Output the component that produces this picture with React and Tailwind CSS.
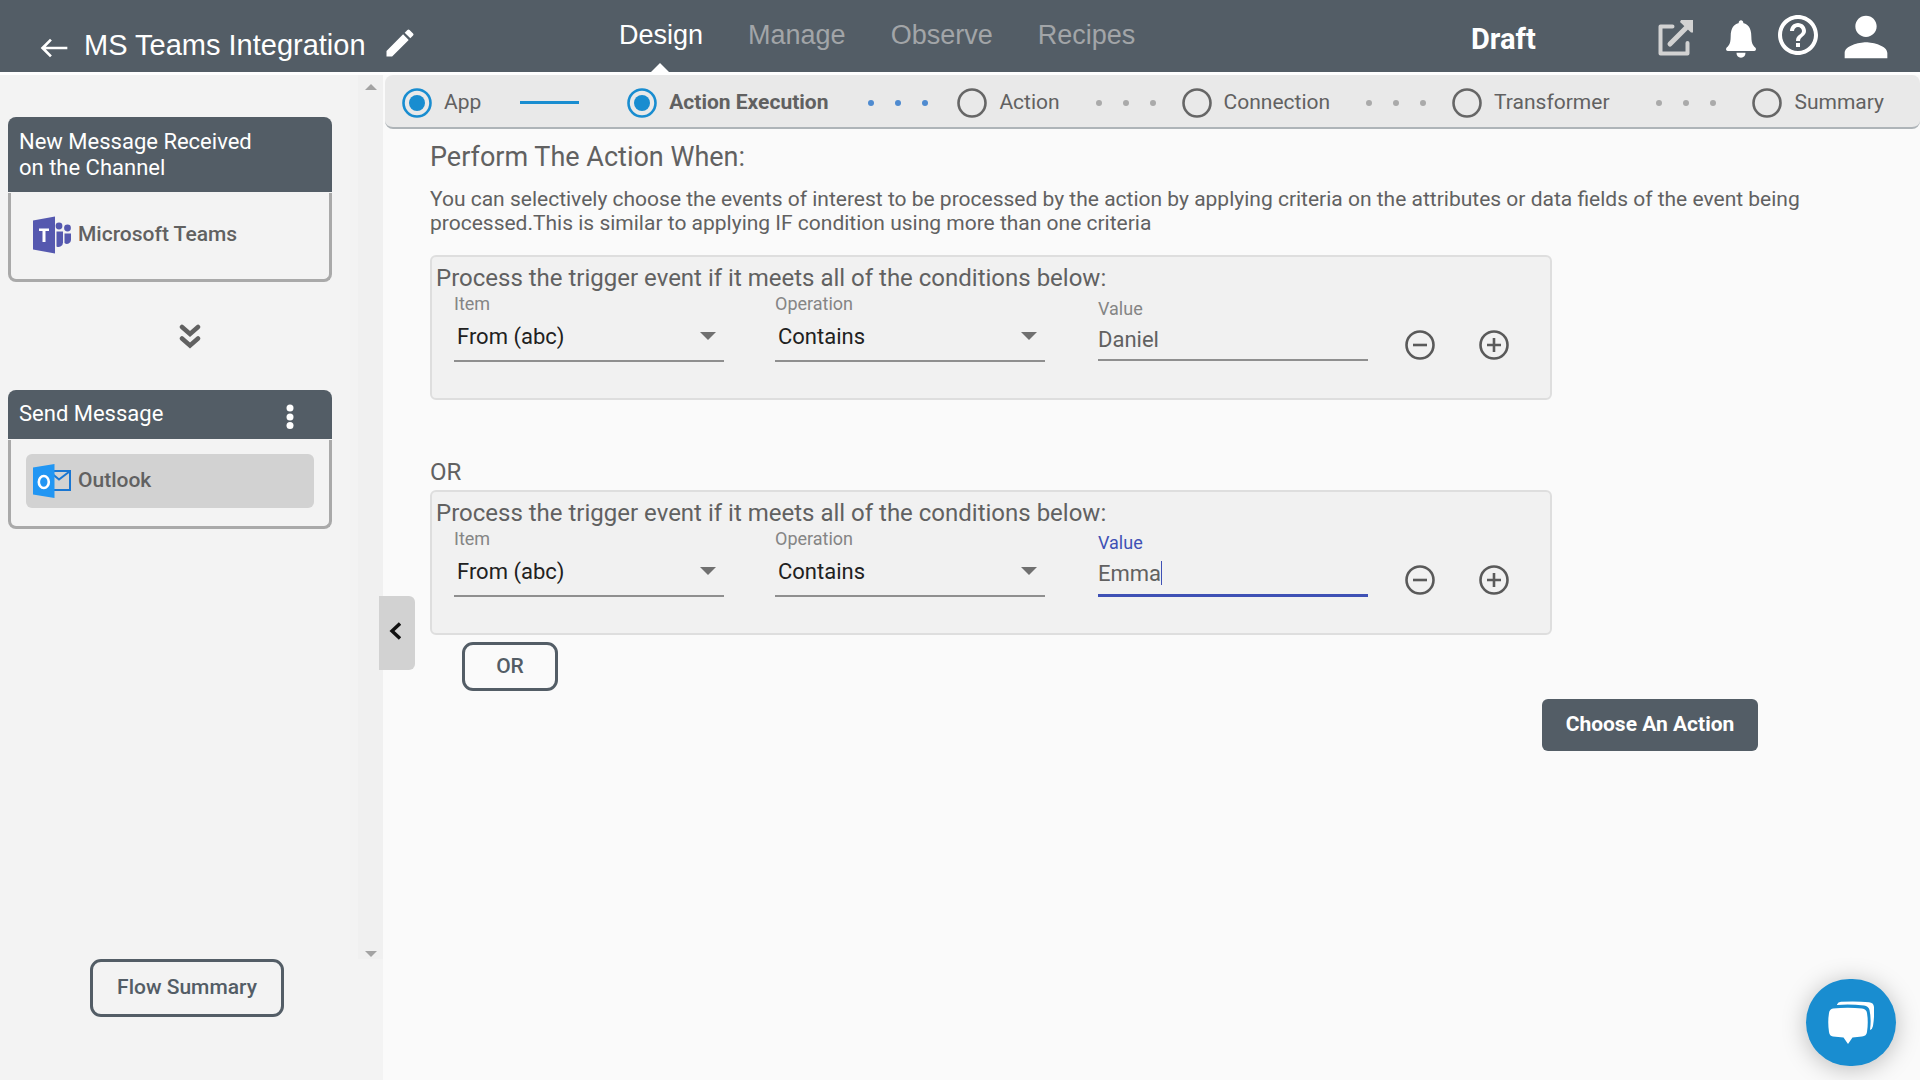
import { IoIosNotifications } from "react-icons/io";
import { MdEdit, MdHelpOutline, MdPerson, MdWest } from "react-icons/md";

const NAV = ["Design", "Manage", "Observe", "Recipes"];

function TeamsLogo() {
  return (
    <svg viewBox="0 0 38 38" className="h-[38px] w-[38px] shrink-0">
      <path fill="#5558af" d="M0 4.500 22 0.500V37.500L0 33.500z" />
      <path fill="#fff" d="M6 12.500h10v2.500h-3.500V26h-3V15H6z" />
      <g fill="#5558af">
        <circle cx="26" cy="10" r="3.400" />
        <circle cx="34.500" cy="12" r="3.400" />
        <path d="M23.500 15.500H30V26.500a4.500 4.500 0 0 1-6.500 4z" />
        <path d="M31.500 17.500H38V24a4 4 0 0 1-6.500 3z" />
      </g>
    </svg>
  );
}

function OutlookLogo() {
  return (
    <svg viewBox="0 0 38 38" className="h-[38px] w-[38px] shrink-0">
      <path fill="none" stroke="#1976d2" strokeWidth="2" d="M20 9H37V28H20M20 12.500 26 17.500 36.500 9.500" />
      <path fill="#2196f3" d="M0 5.500 21.500 2V36L0 32.500z" />
      <ellipse cx="10.800" cy="20" rx="5" ry="6" fill="none" stroke="#fff" strokeWidth="2.600" />
    </svg>
  );
}

function Header() {
  return (
    <header className="grid h-[75px] grid-cols-[619fr_852fr_449fr] items-start border-b-[3px] border-white bg-[#535d66] font-['Liberation_Sans',Arial,sans-serif] text-white">
      <div className="flex items-center pt-[25px] pl-[38px]">
        <button aria-label="Back" className="flex pt-[5px]"><MdWest size={32} /></button>
        <h1 className="ml-[14px] text-[29px] leading-10 whitespace-nowrap">MS Teams Integration</h1>
        <button aria-label="Rename" className="-mt-1 ml-4 flex"><MdEdit size={36} /></button>
      </div>
      <nav className="flex h-[72px] gap-[45px] pt-[15px] text-[27px] leading-10">
        {NAV.map((n, i) => (
          <a key={n} href={"#" + n.toLowerCase()} className={i === 0 ? "relative text-white" : "text-[#a2a5a8]"}>
            {n}
            {i === 0 && <svg viewBox="0 0 20 10" className="absolute top-[48px] left-[31px] h-[10px] w-5"><path fill="#fff" d="M0 10 10 0 20 10z" /></svg>}
          </a>
        ))}
      </nav>
      <div className="flex h-[72px] items-start">
        <span className="pt-[19px] font-[Roboto] text-[29px] leading-10 font-bold">Draft</span>
        <div className="ml-auto flex items-start pr-[22px]">
          <button aria-label="Open in new window" className="mt-[19px] mr-[23px]">
            <svg viewBox="0 0 38 38" className="h-[38px] w-[38px]" fill="none" stroke="#d2d2d2" strokeWidth="4">
              <path strokeLinecap="round" strokeLinejoin="round" d="M16.500 7.500H4.500V34.500H31.500V24" />
              <path strokeWidth="5" strokeLinecap="round" d="M14 25 30 9" />
              <path fill="#d2d2d2" stroke="none" d="M25 1H37V13.500H35L24 3z" />
            </svg>
          </button>
          <button aria-label="Notifications" className="mt-[15px]"><IoIosNotifications size={48} /></button>
          <button aria-label="Help" className="mt-[11px] ml-[9px]"><MdHelpOutline size={48} /></button>
          <button aria-label="Account" className="mt-[5px] ml-[12px]"><MdPerson size={64} /></button>
        </div>
      </div>
    </header>
  );
}

function Sidebar() {
  return (
    <aside className="flex w-[383px] shrink-0 flex-col bg-[#f3f3f3]">
      <div className="flex min-h-0 flex-1">
        <div className="flex-1 pt-[42px] pl-2">
          <section className="w-[324px]">
            <h2 className="rounded-t-lg bg-[#535d66] px-[11px] pt-3 pb-[11px] text-[22px] leading-[26px] text-white">New Message Received<br />on the Channel</h2>
            <div className="mt-px flex h-[89px] items-center gap-[7px] rounded-b-lg border-[3px] border-t-0 border-[#a9a9a9] pb-[3px] pl-[22px] text-[21px] font-medium text-[#616161]">
              <TeamsLogo />Microsoft Teams
            </div>
          </section>
          <div className="ml-[171px] flex h-[108px] w-[22px] flex-col items-center justify-center pt-px text-[#616161]">
            <svg viewBox="0 0 22 26" className="h-[26px] w-[22px]" fill="none" stroke="currentColor" strokeWidth="4.500"><path strokeLinecap="round" d="M3 3 11 10 19 3M3 14.500 11 21.500 19 14.500" /></svg>
          </div>
          <section className="w-[324px]">
            <div className="flex h-[49px] items-center rounded-t-lg bg-[#535d66] pr-[36px] pl-[11px] text-white">
              <h2 className="flex-1 pb-[2px] text-[22px] leading-[26px]">Send Message</h2>
              <button aria-label="More options">
                <svg viewBox="0 0 12 26" className="mt-1 h-[26px] w-3" fill="currentColor"><circle cx="6" cy="4" r="3.500" /><circle cx="6" cy="13" r="3.500" /><circle cx="6" cy="21.500" r="3.500" /></svg>
              </button>
            </div>
            <div className="mt-px h-[89px] rounded-b-lg border-[3px] border-t-0 border-[#a9a9a9] px-[15px] pt-[14px]">
              <button className="flex h-[54px] w-full items-center gap-[7px] rounded-md bg-[#d2d2d2] px-[7px] text-[21px] font-medium text-[#616161]"><OutlookLogo />Outlook</button>
            </div>
          </section>
        </div>
        <div className="flex w-[25px] flex-col items-center justify-between bg-[#f0f0f0] pt-[9px] pb-[2px] text-[#a3a3a3]">
          <svg viewBox="0 0 12 6" className="h-[6px] w-3"><path fill="currentColor" d="M0 6 6 0 12 6z" /></svg>
          <svg viewBox="0 0 12 6" className="h-[6px] w-3"><path fill="currentColor" d="M0 0 6 6 12 0z" /></svg>
        </div>
      </div>
      <div className="h-[121px] pl-[90px]">
        <button className="h-[58px] w-[194px] rounded-[11px] border-[3px] border-[#535d66] px-1 text-[21px] font-medium text-[#535d66]">Flow Summary</button>
      </div>
    </aside>
  );
}

function Step({ label, state }) {
  return (
    <a href="#step" aria-current={state === "current" ? "step" : undefined} className="flex items-center gap-3 whitespace-nowrap">
      <svg viewBox="0 0 30 30" className="h-[30px] w-[30px]" fill="none">
        <circle cx="15" cy="15" r="13.500" strokeWidth="2.600" stroke={state ? "#198dd0" : "#666"} />
        {state && <circle cx="15" cy="15" r="8" fill="#198dd0" />}
      </svg>
      <span className={state === "current" ? "font-bold" : ""}>{label}</span>
    </a>
  );
}

function Dots({ grow, color = "bg-[#aaa]" }) {
  return (
    <div className="flex items-center justify-center gap-[21px] pl-[10px]" style={{ flexGrow: grow, flexBasis: 0 }}>
      {[0, 1, 2].map((i) => <span key={i} className={"h-[6px] w-[6px] rounded-full " + color} />)}
    </div>
  );
}

function Stepper() {
  return (
    <nav aria-label="Steps" className="ml-[2px] flex h-[54px] items-center rounded-lg border-b-2 border-[#aeb4b8] bg-[#e9e9e9] pt-[3px] pr-[36px] pl-[17px] text-[21px] text-[#616161]">
      <Step label="App" state="done" />
      <div className="flex shrink-0 grow-[136] basis-0 justify-center pr-[10px]"><span className="h-[3px] w-[59px] bg-[#198dd0]" /></div>
      <Step label="Action Execution" state="current" />
      <Dots grow={119} color="bg-[#4f8bd0]" />
      <Step label="Action" />
      <Dots grow={112} />
      <Step label="Connection" />
      <Dots grow={112} />
      <Step label="Transformer" />
      <Dots grow={133} />
      <Step label="Summary" />
    </nav>
  );
}

function SelectField({ label, value, id }) {
  return (
    <div className="w-[270px]">
      <label htmlFor={id} className="block text-[18px] leading-5 text-[#858585]">{label}</label>
      <div className="relative border-b-2 border-[#8f8f8f]">
        <select id={id} defaultValue={value} className="block h-[46px] w-full appearance-none bg-transparent pb-[2px] pl-[3px] text-[22px] text-[#212121] outline-none">
          <option>{value}</option>
        </select>
        <svg viewBox="0 0 16 8" className="pointer-events-none absolute top-[18px] right-2 h-2 w-4"><path fill="#707070" d="M0 0H16L8 8z" /></svg>
      </div>
    </div>
  );
}

function Condition({ id, value, focused }) {
  return (
    <section className="h-[145px] w-[1122px] max-w-full rounded-md border-2 border-[#dedede] bg-[#f1f1f1]">
      <h3 className="pt-[7px] pl-1 text-[24px] leading-[28px]">Process the trigger event if it meets all of the conditions below:</h3>
      <div className="flex items-start pt-[2px] pl-[22px]">
        <SelectField id={id + "-item"} label="Item" value="From (abc)" />
        <div className="w-[51px]" />
        <SelectField id={id + "-operation"} label="Operation" value="Contains" />
        <div className={focused ? "relative ml-[53px] w-[270px] pt-1 text-[#3f51b5]" : "relative ml-[53px] w-[270px] pt-[5px] text-[#858585]"}>
          <label htmlFor={id + "-value"} className="block text-[18px] leading-5">Value</label>
          <input
            id={id + "-value"}
            defaultValue={value}
            className={focused ? "block h-11 w-full border-b-[3px] border-[#3f51b5] pb-px text-[22px] text-[#616161] outline-none" : "block h-[42px] w-full border-b-2 border-[#8f8f8f] text-[22px] text-[#616161] outline-none"}
          />
          {focused && <span className="absolute top-[32px] left-[63px] h-6 w-px bg-[#3f51b5]" />}
        </div>
        <RoundButton label="Remove condition" className="mt-9 ml-[37px]" d="M8 15H22" />
        <RoundButton label="Add condition" className="mt-9 ml-11" d="M8 15H22M15 8V22" />
      </div>
    </section>
  );
}

function RoundButton({ label, className, d }) {
  return (
    <button aria-label={label} className={className}>
      <svg viewBox="0 0 30 30" className="h-[30px] w-[30px]" fill="none" stroke="#5a5a5a" strokeWidth="2.600"><circle cx="15" cy="15" r="13.500" /><path d={d} /></svg>
    </button>
  );
}

export default function App() {
  return (
    <div className="flex min-h-screen flex-col bg-[#fafafa] font-[Roboto,sans-serif] text-[#616161]">
      <Header />
      <div className="relative flex flex-1">
        <Sidebar />
        <main className="min-w-0 flex-1">
          <Stepper />
          <div className="pr-[100px] pl-[47px]">
            <h2 className="pt-[12px] text-[27px] leading-8">Perform The Action When:</h2>
            <p className="mt-[14px] mb-5 text-[21px] leading-6">You can selectively choose the events of interest to be processed by the action by applying criteria on the attributes or data fields of the event being processed.This is similar to applying IF condition using more than one criteria</p>
            <Condition id="first" value="Daniel" />
            <div className="mt-[58px] mb-1 text-[24px] leading-7">OR</div>
            <Condition id="second" value="Emma" focused />
            <button className="mt-[7px] ml-8 block h-[49px] w-24 rounded-[11px] border-[3px] border-[#535d66] text-[21px] font-medium text-[#535d66]">OR</button>
            <div className="flex justify-end pt-2 pr-[62px]">
              <button className="h-[52px] w-[216px] rounded-md bg-[#535d66] text-[21px] font-bold text-white">Choose An Action</button>
            </div>
          </div>
        </main>
        <button aria-label="Collapse sidebar" className="absolute top-[521px] left-[379px] flex h-[74px] w-9 items-center rounded-r-md bg-[#d2d2d2] pb-1 pl-[10px]">
          <svg viewBox="0 0 12 18" className="h-[18px] w-3" fill="none" stroke="#111" strokeWidth="3.400"><path d="M11 1.500 3 9 11 16.500" /></svg>
        </button>
      </div>
      <button aria-label="Open chat" className="fixed right-6 bottom-[14px] flex h-[87px] w-[90px] items-center justify-center rounded-full bg-[#198dd0] shadow-[0_3px_24px_rgba(0,0,0,0.25)]">
        <svg viewBox="0 0 46 44" className="h-11 w-[46px]" fill="#fff">
          <path d="M5 7.500Q20 6 34 7.500Q38.500 8 39 12Q40.500 21 39 31Q38.500 35 34 35.500L24.500 36.500 20 43 15.500 36.500 5 35.500Q1.500 35 1 31Q-0.500 21 1 12Q1.500 8 5 7.500z" />
          <path d="M9 3.500Q10 1 13 0.800Q28 0 41 1.200Q45.500 1.500 46 6Q46.500 16 45 25Q44.500 28 42 29Q43.500 18 41.500 9Q40.500 5 36 4.500Q22 3 9 4z" />
        </svg>
      </button>
    </div>
  );
}
